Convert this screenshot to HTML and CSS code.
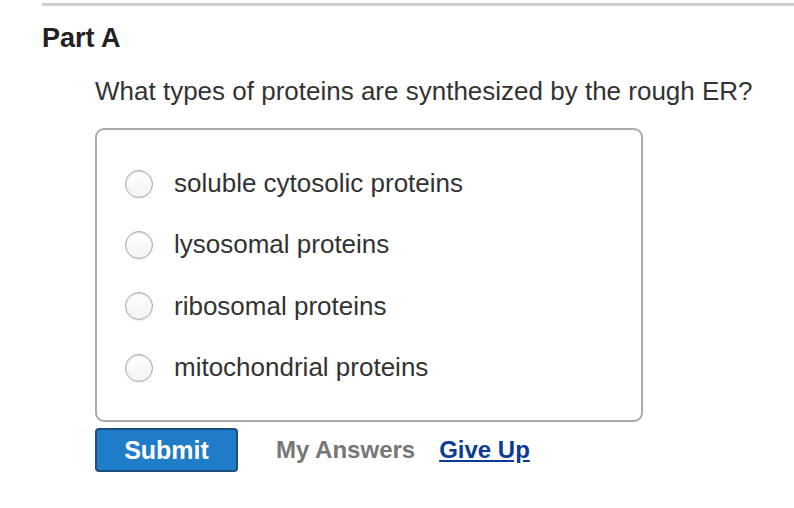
FILE: index.html
```html
<!DOCTYPE html>
<html lang="en">
<head>
    <meta charset="UTF-8">
    <title>Part A</title>
    <link rel="stylesheet" href="styles.css">
</head>
<body>

<div class="part">
    <div class="part-bar"></div>
    <h2 class="part-title">Part A</h2>

    <div class="question">
        <p class="prompt">What types of proteins are synthesized by the rough ER?</p>

        <div class="choices">
            <label class="choice"><span class="radio"></span>soluble cytosolic proteins</label>
            <label class="choice"><span class="radio"></span>lysosomal proteins</label>
            <label class="choice"><span class="radio"></span>ribosomal proteins</label>
            <label class="choice"><span class="radio"></span>mitochondrial proteins</label>
        </div>

        <div class="actions">
            <button class="submit">Submit</button>
            <span class="my-answers">My Answers</span>
            <a class="give-up" href="#">Give Up</a>
        </div>
    </div>
</div>

</body>
</html>
```

FILE: styles.css
```css
*{
    margin: 0;
    padding: 0;
    box-sizing: border-box;
}

body{
    background-color: #ffffff;
    font-family: "Liberation Sans", Arial, Helvetica, sans-serif;
    color: #333333;
}

.part{
    padding: 3px 0 0 42px;
}

.part-bar{
    height: 3px;
    background-color: #cfcfcf;
}

.part-title{
    margin-top: 16px;
    font-size: 27px;
    line-height: 32px;
    font-weight: bold;
    color: #222222;
}

.question{
    padding-left: 53px;
}

.prompt{
    margin-top: 19px;
    font-size: 26px;
    line-height: 36px;
}

.choices{
    margin-top: 19px;
    width: 548px;
    height: 294px;
    padding: 23px 0 0 28px;
    border: 2px solid #ababab;
    border-radius: 9px;
}

.choice{
    display: flex;
    align-items: center;
    height: 61.3px;
    font-size: 26px;
}

.radio{
    width: 28px;
    height: 28px;
    margin-right: 21px;
    border: 1px solid #a9a9a9;
    border-radius: 50%;
    background: linear-gradient(#ffffff, #f4f4f4);
    box-shadow: inset 0 1px 2px rgba(0, 0, 0, 0.15), 0 1px 1px rgba(0, 0, 0, 0.08);
}

.actions{
    display: flex;
    align-items: center;
    margin-top: 6px;
}

.submit{
    width: 143px;
    height: 44px;
    border: 2px solid #1c4f7e;
    border-radius: 4px;
    background-color: #1e7cc8;
    color: #ffffff;
    font-family: inherit;
    font-size: 25px;
    font-weight: bold;
}

.my-answers{
    margin-left: 38px;
    font-size: 24px;
    font-weight: bold;
    color: #777777;
}

.give-up{
    margin-left: 24px;
    font-size: 24px;
    font-weight: bold;
    color: #0b3b94;
}
```
